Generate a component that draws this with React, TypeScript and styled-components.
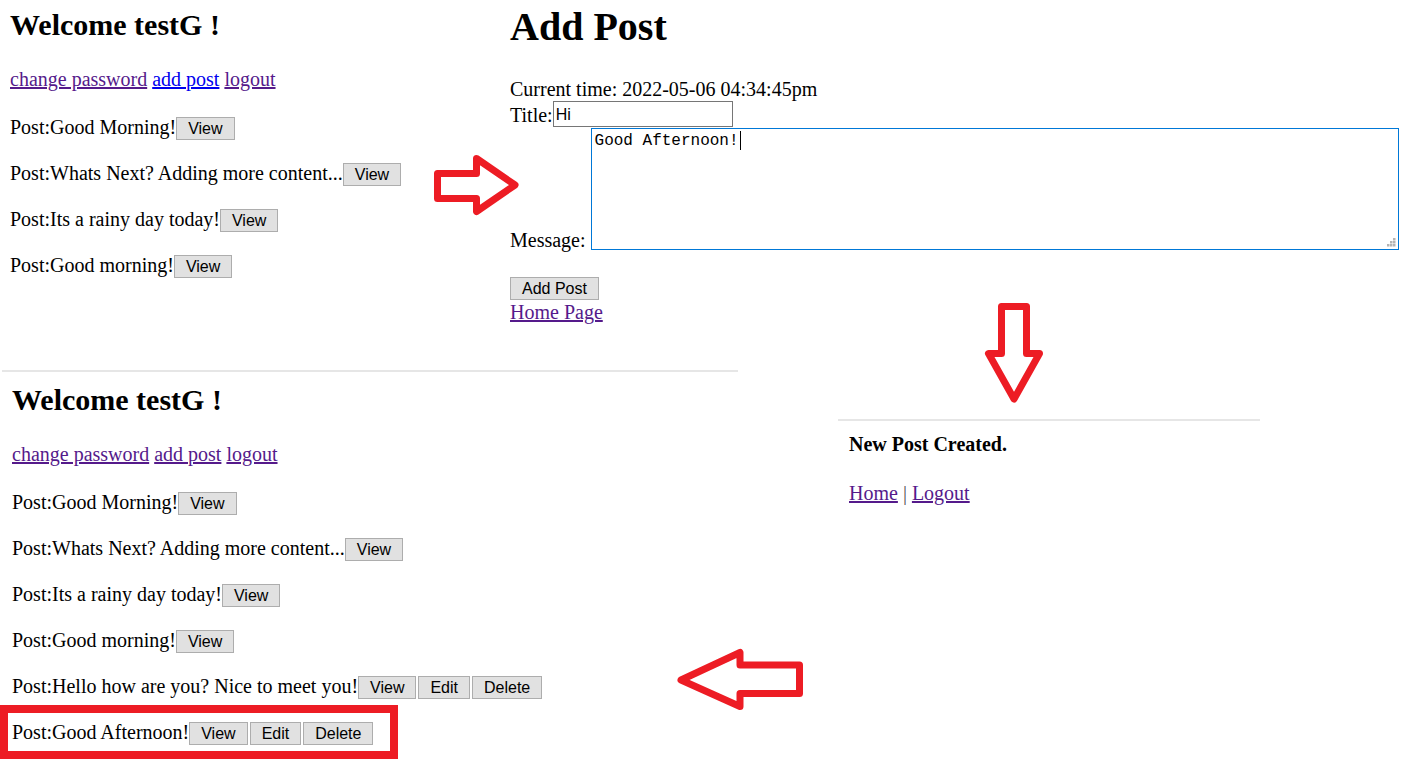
import styled, { createGlobalStyle } from "styled-components";

const GlobalStyle = createGlobalStyle`
  body {
    margin: 0;
    background: #fff;
  }
`;

// the picture is a collage of browser screenshots, so each one sits on a canvas
const Canvas = styled.div`
  position: relative;
  width: 1409px;
  height: 777px;
  overflow: hidden;
  background: #fff;
  font-family: "Liberation Serif", "Times New Roman", serif;
  font-size: 20px;
  color: #000;
`;

const Shot = styled.section<{ $x: number; $y: number; $w: number; $divider?: boolean; $padTop?: number; $padLeft?: number }>`
  position: absolute;
  left: ${(p) => p.$x}px;
  top: ${(p) => p.$y}px;
  width: ${(p) => p.$w}px;
  box-sizing: border-box;
  padding-top: ${(p) => p.$padTop || 0}px;
  padding-left: ${(p) => p.$padLeft || 0}px;
  border-top: ${(p) => (p.$divider ? "2px solid #e6e6e6" : "none")};
`;

const Welcome = styled.h2`
  margin: 8px 0 26px;
  font-size: 30px;
  line-height: 34px;
  font-weight: bold;
`;

const TopLinks = styled.p`
  margin: 0;
  line-height: 23px;
`;

const Link = styled.a<{ $fresh?: boolean }>`
  color: ${(p) => (p.$fresh ? "#0000ee" : "#551a8b")};
  text-decoration: underline;
  cursor: pointer;
`;

const PostList = styled.div`
  display: flex;
  flex-direction: column;
  gap: 20px;
  margin-top: 23px;
`;

const PostRow = styled.div`
  line-height: 26px;
  height: 26px;
  white-space: nowrap;
`;

const Button = styled.button`
  height: 23px;
  box-sizing: border-box;
  font-family: "Liberation Sans", Arial, sans-serif;
  font-size: 16px;
  line-height: 19px;
  padding: 0 11px;
  margin: 0;
  border: 1px solid #adadad;
  background: #e1e1e1;
  color: #000;
  & + & {
    margin-left: 2px;
  }
`;

const PageTitle = styled.h1`
  margin: 4px 0 28px;
  font-size: 40px;
  line-height: 46px;
  font-weight: bold;
`;

const Line = styled.div`
  line-height: 23px;
`;

const FieldRow = styled.div<{ $gapTop?: number }>`
  display: flex;
  align-items: flex-end;
  margin-top: ${(p) => p.$gapTop || 0}px;
`;

const Label = styled.span<{ $gap?: number; $lift?: number }>`
  line-height: 20px;
  margin-right: ${(p) => p.$gap || 0}px;
  margin-bottom: ${(p) => p.$lift || 0}px;
`;

const TextInput = styled.input`
  width: 180px;
  height: 26px;
  box-sizing: border-box;
  margin: 0;
  padding: 3px 2px 1px;
  border: 1px solid #767676;
  font-family: "Liberation Sans", Arial, sans-serif;
  font-size: 16px;
  outline: none;
`;

const AreaWrap = styled.div`
  position: relative;
  width: 808px;
  height: 122px;
`;

const MessageArea = styled.textarea`
  display: block;
  width: 100%;
  height: 100%;
  box-sizing: border-box;
  margin: 0;
  padding: 3px 3px;
  border: 1px solid #0078d7;
  font-family: "Liberation Mono", "Courier New", monospace;
  font-size: 16px;
  line-height: 18px;
  resize: none;
  outline: none;
`;

const Caret = styled.span`
  position: absolute;
  left: 149px;
  top: 3px;
  width: 1px;
  height: 19px;
  background: #000;
`;

const Grip = styled.svg`
  position: absolute;
  right: 3px;
  bottom: 3px;
`;

const SubmitButton = styled(Button)`
  display: block;
  margin-top: 27px;
`;

const BlockLink = styled(Link)`
  display: block;
  width: max-content;
  line-height: 23px;
  margin-top: 1px;
`;

const Notice = styled.p`
  margin: 12px 0 0;
  line-height: 23px;
  font-weight: bold;
`;

const FooterLinks = styled.p`
  margin: 26px 0 0;
  line-height: 23px;
`;

const Pipe = styled.span`
  color: #555;
`;

const Arrow = styled.svg<{ $x: number; $y: number }>`
  position: absolute;
  left: ${(p) => p.$x}px;
  top: ${(p) => p.$y}px;
  overflow: visible;
`;

const Highlight = styled.div`
  position: absolute;
  left: 0;
  top: 705px;
  width: 398px;
  height: 54px;
  box-sizing: border-box;
  border: 8px solid #ed1c24;
`;

const basePosts = ["Good Morning!", "Whats Next? Adding more content...", "Its a rainy day today!", "Good morning!"];

type Post = { text: string; own?: boolean };

function HomeScreen({ posts, freshAddPost }: { posts: Post[]; freshAddPost?: boolean }) {
  return (
    <>
      <Welcome>Welcome testG !</Welcome>
      <TopLinks>
        <Link>change password</Link> <Link $fresh={freshAddPost}>add post</Link> <Link>logout</Link>
      </TopLinks>
      <PostList>
        {posts.map((post, i) => (
          <PostRow key={i}>
            Post:{post.text}
            <Button>View</Button>
            {post.own && <Button>Edit</Button>}
            {post.own && <Button>Delete</Button>}
          </PostRow>
        ))}
      </PostList>
    </>
  );
}

function RedArrow({ x, y, w, h, points }: { x: number; y: number; w: number; h: number; points: string }) {
  return (
    <Arrow $x={x} $y={y} width={w} height={h} viewBox={`0 0 ${w} ${h}`}>
      <polygon points={points} fill="none" stroke="#ed1c24" strokeWidth={7} strokeLinejoin="round" />
    </Arrow>
  );
}

export default function App() {
  const before: Post[] = basePosts.map((text) => ({ text }));
  const after: Post[] = [
    ...before,
    { text: "Hello how are you? Nice to meet you!", own: true },
    { text: "Good Afternoon!", own: true },
  ];

  return (
    <>
      <GlobalStyle />
      <Canvas>
        <Shot $x={0} $y={0} $w={430} $padLeft={10}>
          <HomeScreen posts={before} freshAddPost />
        </Shot>

        <Shot $x={510} $y={0} $w={899}>
          <PageTitle>Add Post</PageTitle>
          <Line>Current time: 2022-05-06 04:34:45pm</Line>
          <FieldRow>
            <Label $lift={2}>Title:</Label>
            <TextInput value="Hi" readOnly />
          </FieldRow>
          <FieldRow $gapTop={1}>
            <Label $gap={5}>Message:</Label>
            <AreaWrap>
              <MessageArea value="Good Afternoon!" readOnly />
              <Caret />
              <Grip width="9" height="9" viewBox="0 0 9 9">
                <rect x="6" y="0" width="2.5" height="2.5" fill="#b4b4b4" />
                <rect x="3" y="3" width="2.5" height="2.5" fill="#b4b4b4" />
                <rect x="6" y="3" width="2.5" height="2.5" fill="#b4b4b4" />
                <rect x="0" y="6" width="2.5" height="2.5" fill="#b4b4b4" />
                <rect x="3" y="6" width="2.5" height="2.5" fill="#b4b4b4" />
                <rect x="6" y="6" width="2.5" height="2.5" fill="#b4b4b4" />
              </Grip>
            </AreaWrap>
          </FieldRow>
          <SubmitButton>Add Post</SubmitButton>
          <BlockLink>Home Page</BlockLink>
        </Shot>

        <Shot $x={2} $y={370} $w={736} $divider $padTop={3} $padLeft={10}>
          <HomeScreen posts={after} />
        </Shot>

        <Shot $x={838} $y={419} $w={422} $divider $padLeft={11}>
          <Notice>New Post Created.</Notice>
          <FooterLinks>
            <Link>Home</Link> <Pipe>|</Pipe> <Link>Logout</Link>
          </FooterLinks>
        </Shot>

        <RedArrow x={430} y={150} w={95} h={70} points="7.5,23.5 46.5,23.5 46.5,8.5 85,35 46.5,61.5 46.5,48.5 7.5,48.5" />
        <RedArrow x={980} y={298} w={70} h={110} points="21.5,8.5 46.5,8.5 46.5,55.5 59.5,55.5 34,101 8.5,55.5 21.5,55.5" />
        <RedArrow x={670} y={642} w={140} h={75} points="11,38 70,10.5 70,23 129.5,23 129.5,51.5 70,51.5 70,64.5" />
        <Highlight />
      </Canvas>
    </>
  );
}
